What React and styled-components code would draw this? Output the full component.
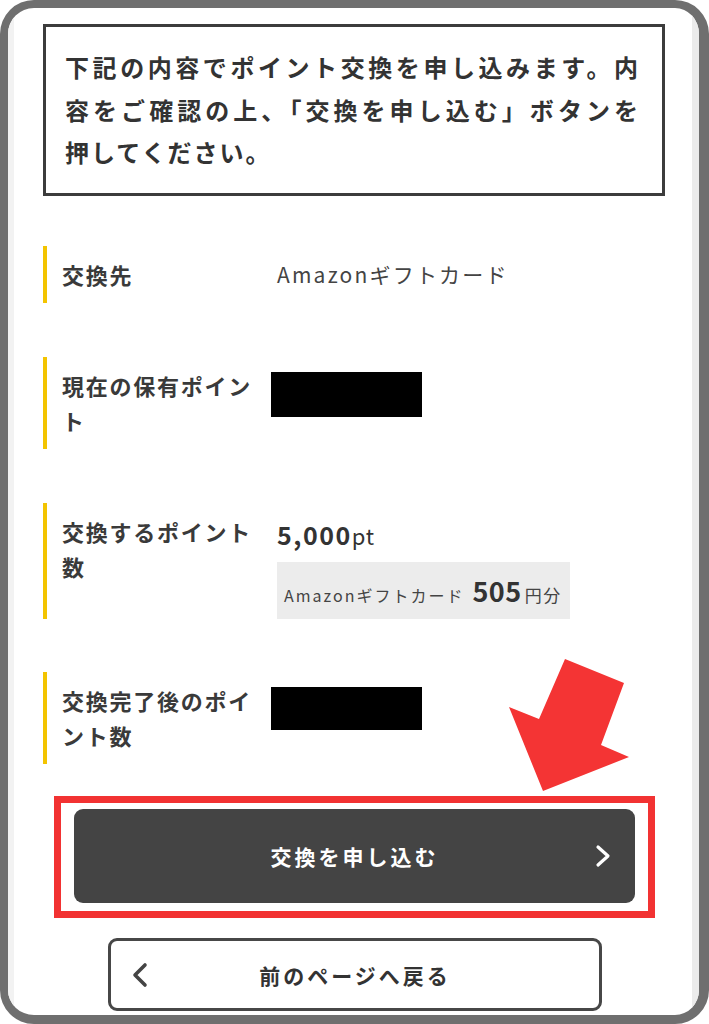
import React from 'react';
import styled, { createGlobalStyle } from 'styled-components';

const GlobalStyle = createGlobalStyle`
  body {
    margin: 0;
    background: #ffffff;
    font-family: "Noto Sans CJK JP", "Noto Sans", sans-serif;
    color: #333333;
  }
`;

const StyledFrame = styled.div`
  position: relative;
  width: 709px;
  height: 1024px;
  box-sizing: border-box;
  border: 8px solid #6f6f6f;
  border-right-width: 10px;
  border-bottom-width: 9px;
  border-radius: 34px;
  overflow: hidden;
  background: #ffffff;
`;

const StyledScreen = styled.div`
  height: 100%;
  box-sizing: border-box;
  border-left: 6px solid #f2f2f2;
  border-right: 7px solid #ebebeb;
  padding: 16px 27px 0 29px;
`;

const StyledColumn = styled.div`
  width: 622px;
  display: flex;
  flex-direction: column;
`;

const StyledNotice = styled.div`
  box-sizing: border-box;
  border: 3px solid #3c3c3c;
  padding: 19px 22px 20px 19px;
  height: 172px;
`;

const StyledNoticeLine = styled.div`
  font-size: 24px;
  font-weight: 700;
  line-height: 42.5px;
  letter-spacing: 2px;
  color: #333333;
  white-space: nowrap;
  text-align: left;
  text-align-last: ${(props) => (props.$fill ? 'justify' : 'left')};
`;

const StyledRow = styled.div`
  display: flex;
  align-items: flex-start;
  border-left: 4px solid #f3c400;
  margin-top: ${(props) => props.$gap}px;
`;

const StyledLabel = styled.div`
  box-sizing: border-box;
  width: 224px;
  flex-shrink: 0;
  padding: 11px 9px 11px 15px;
  font-size: 22px;
  font-weight: 700;
  line-height: 35px;
  letter-spacing: 1.75px;
  color: #3a3a3a;
`;

const StyledValue = styled.div`
  padding: 11px 0 0 6px;
  display: flex;
  flex-direction: column;
  align-items: flex-start;
`;

const StyledText = styled.div`
  font-size: 21px;
  line-height: 35px;
  letter-spacing: 2.2px;
  color: #444444;
`;

const StyledPoints = styled.div`
  font-size: 25px;
  font-weight: 700;
  line-height: 40px;
  letter-spacing: 1.5px;
  color: #333333;

  span {
    font-size: 22px;
    font-weight: 400;
    letter-spacing: 1px;
  }
`;

const StyledRate = styled.div`
  margin-top: 7px;
  display: inline-flex;
  align-items: baseline;
  background: #ececec;
  padding: 11px 8px 6px 7px;
  color: #444444;
`;

const StyledRateText = styled.span`
  font-size: ${(props) => props.$size}px;
  font-weight: ${(props) => (props.$bold ? 700 : 400)};
  letter-spacing: ${(props) => props.$spacing}px;
  line-height: 36px;
  margin-left: ${(props) => props.$offset || 0}px;
  color: ${(props) => (props.$bold ? '#333333' : '#444444')};
`;

const StyledMask = styled.div`
  width: 151px;
  height: ${(props) => props.$height}px;
  background: #000000;
  margin: 4px 0 0 -6px;
`;

const StyledHighlight = styled.div`
  margin: 32px 0 0 11px;
  width: 601px;
  box-sizing: border-box;
  border: 7px solid #f23232;
  padding: 6px 13px 8px 13px;
`;

const StyledButton = styled.button`
  display: grid;
  grid-template-columns: 60px 1fr 60px;
  align-items: center;
  width: ${(props) => props.$width}px;
  height: ${(props) => props.$height}px;
  box-sizing: border-box;
  padding: 0;
  border: ${(props) => (props.$primary ? 'none' : '3px solid #474747')};
  border-radius: 9px;
  background: ${(props) => (props.$primary ? '#444444' : '#ffffff')};
  color: ${(props) => (props.$primary ? '#ffffff' : '#333333')};
  font-family: inherit;
  font-size: 21px;
  font-weight: 700;
  letter-spacing: 3px;
  cursor: pointer;
`;

const StyledButtonLabel = styled.span`
  grid-column: 2;
  text-align: center;
`;

const StyledChevron = styled.svg`
  grid-column: ${(props) => (props.$left ? 1 : 3)};
  grid-row: 1;
  justify-self: ${(props) => (props.$left ? 'start' : 'end')};
  margin: ${(props) => (props.$left ? '0 0 0 21px' : '0 24px 0 0')};
`;

const StyledBack = styled.div`
  margin: 20px 0 0 65px;
`;

const StyledArrow = styled.svg`
  position: absolute;
  left: 492px;
  top: 642px;
  pointer-events: none;
`;

const rows = [
  { id: 1, label: '交換先', gap: 50, kind: 'text', value: 'Amazonギフトカード' },
  { id: 2, label: '現在の保有ポイント', gap: 54, kind: 'mask', height: 45 },
  { id: 3, label: '交換するポイント数', gap: 54, kind: 'points' },
  { id: 4, label: '交換完了後のポイント数', gap: 53, kind: 'mask', height: 43 },
];

const renderValue = (row) => {
  if (row.kind === 'text') return <StyledText>{row.value}</StyledText>;
  if (row.kind === 'mask') return <StyledMask $height={row.height} />;
  return (
    <>
      <StyledPoints>
        5,000<span>pt</span>
      </StyledPoints>
      <StyledRate>
        <StyledRateText $size={16} $spacing={2}>Amazonギフトカード</StyledRateText>
        <StyledRateText $size={27} $spacing={0.5} $bold $offset={8}>505</StyledRateText>
        <StyledRateText $size={17} $spacing={1.5} $offset={3}>円分</StyledRateText>
      </StyledRate>
    </>
  );
};

const App = () => {
  return (
    <>
      <GlobalStyle />
      <StyledFrame>
        <StyledScreen>
          <StyledColumn>
            <StyledNotice>
              <StyledNoticeLine $fill>下記の内容でポイント交換を申し込みます。内</StyledNoticeLine>
              <StyledNoticeLine $fill>容をご確認の上、「交換を申し込む」ボタンを</StyledNoticeLine>
              <StyledNoticeLine>押してください。</StyledNoticeLine>
            </StyledNotice>

            {rows.map((row) => (
              <StyledRow key={row.id} $gap={row.gap}>
                <StyledLabel>{row.label}</StyledLabel>
                <StyledValue>{renderValue(row)}</StyledValue>
              </StyledRow>
            ))}

            <StyledHighlight>
              <StyledButton $primary $width={561} $height={94}>
                <StyledButtonLabel>交換を申し込む</StyledButtonLabel>
                <StyledChevron width="16" height="24" viewBox="0 0 16 24">
                  <polyline points="3,3 13,12 3,21" fill="none" stroke="#ffffff" strokeWidth="3.2" strokeLinecap="round" strokeLinejoin="round" />
                </StyledChevron>
              </StyledButton>
            </StyledHighlight>

            <StyledBack>
              <StyledButton $width={494} $height={73}>
                <StyledChevron $left width="16" height="26" viewBox="0 0 16 26">
                  <polyline points="13,3 3,13 13,23" fill="none" stroke="#444444" strokeWidth="3.6" strokeLinecap="round" strokeLinejoin="round" />
                </StyledChevron>
                <StyledButtonLabel>前のページへ戻る</StyledButtonLabel>
              </StyledButton>
            </StyledBack>
          </StyledColumn>
        </StyledScreen>

        <StyledArrow width="140" height="150" viewBox="0 0 140 150">
          <polygon points="43,141 9,57 39,69 65,9 124,33 101,95 129,107" fill="#f43434" />
        </StyledArrow>
      </StyledFrame>
    </>
  );
};

export default App;
